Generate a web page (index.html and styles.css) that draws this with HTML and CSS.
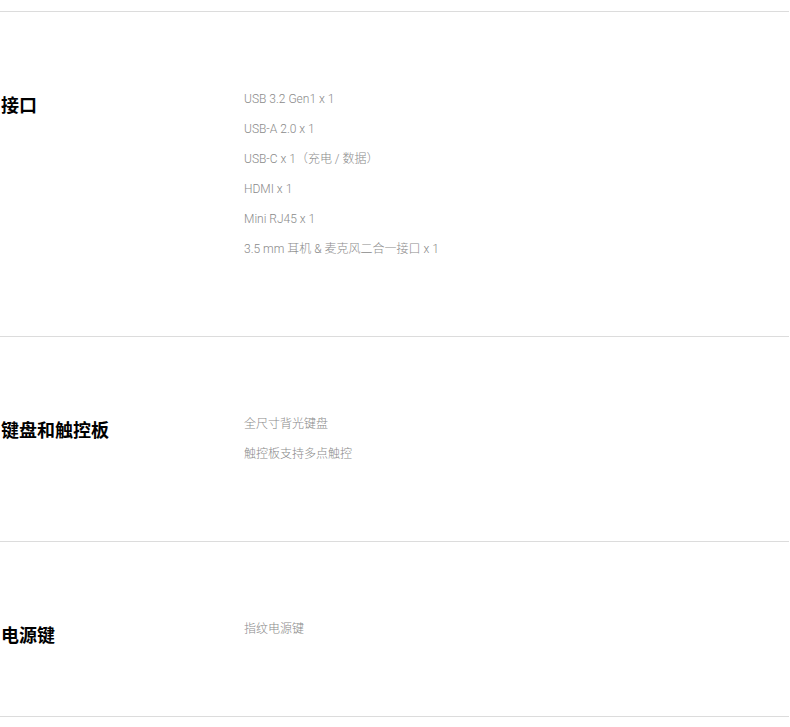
FILE: index.html
```html
<!DOCTYPE html>
<html lang="zh-CN">
<head>
    <meta charset="UTF-8">
    <meta name="viewport" content="width=device-width, initial-scale=1.0">
    <title>规格参数</title>
    <link rel="stylesheet" href="styles.css">
</head>
<body>
    <div class="spec-list">
        <div class="spec-row">
            <h3 class="spec-title">接口</h3>
            <ul class="spec-items">
                <li>USB 3.2 Gen1 x 1</li>
                <li>USB-A 2.0 x 1</li>
                <li>USB-C x 1（充电 / 数据）</li>
                <li>HDMI x 1</li>
                <li>Mini RJ45 x 1</li>
                <li>3.5 mm 耳机 &amp; 麦克风二合一接口 x 1</li>
            </ul>
        </div>
        <div class="spec-row">
            <h3 class="spec-title">键盘和触控板</h3>
            <ul class="spec-items">
                <li>全尺寸背光键盘</li>
                <li>触控板支持多点触控</li>
            </ul>
        </div>
        <div class="spec-row">
            <h3 class="spec-title">电源键</h3>
            <ul class="spec-items">
                <li>指纹电源键</li>
            </ul>
        </div>
    </div>
</body>
</html>
```

FILE: styles.css
```css
body {
    margin: 0;
    padding-top: 11px;
    background: #fff;
    font-family: Roboto, "Noto Sans CJK SC", sans-serif;
    color: #000;
}
.spec-list {
    width: 789px;
    border-bottom: 1px solid #dcdcdc;
}
.spec-row {
    display: flex;
    align-items: flex-start;
    border-top: 1px solid #dcdcdc;
    padding: 72px 0 72px 1px;
}
.spec-title {
    width: 243px;
    flex-shrink: 0;
    margin: 5px 0 -5px;
    font-size: 18px;
    line-height: 30px;
    font-weight: 700;
    color: #000;
    font-family: "Noto Sans CJK SC", sans-serif;
}
.spec-items {
    list-style: none;
    margin: 0;
    padding: 0;
    font-size: 12px;
    line-height: 30px;
    font-weight: 300;
    color: #8a8a8a;
}
```
